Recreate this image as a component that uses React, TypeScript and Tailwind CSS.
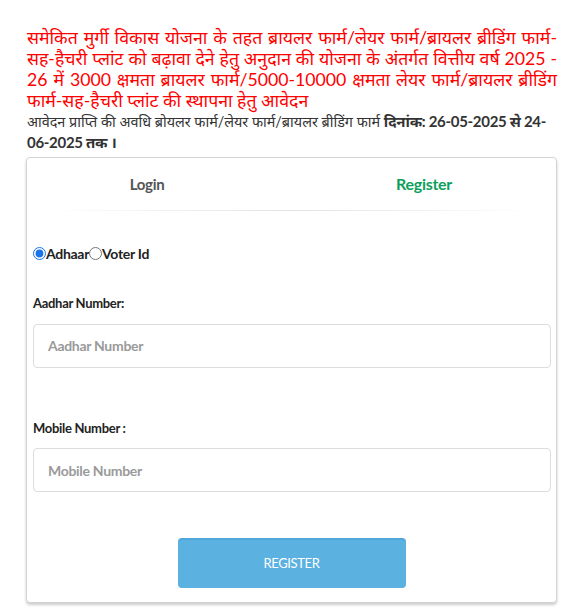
import React from "react";

export default function App() {
  const font = { fontFamily: '"Lato", "Noto Sans Devanagari", "Noto Sans", sans-serif' };
  return (
    <div className="w-[567px] h-[608px] bg-white overflow-hidden" style={font}>
      <div className="pl-[27px] pr-[10px] pt-[27px]">
        <p className="text-[17.7px] leading-[21px] text-[#ff0000] text-justify">
          समेकित मुर्गी विकास योजना के तहत ब्रायलर फार्म/लेयर फार्म/ब्रायलर ब्रीडिंग फार्म-सह-हैचरी प्लांट को बढ़ावा देने हेतु अनुदान की योजना के अंतर्गत वित्तीय वर्ष 2025 - 26 में 3000 क्षमता ब्रायलर फार्म/5000-10000 क्षमता लेयर फार्म/ब्रायलर ब्रीडिंग फार्म-सह-हैचरी प्लांट की स्थापना हेतु आवेदन
        </p>
        <p className="text-[14.4px] leading-[21px] text-[#333]">
          आवेदन प्राप्ति की अवधि ब्रोयलर फार्म/लेयर फार्म/ब्रायलर ब्रीडिंग फार्म{" "}
          <b className="text-[15px] tracking-[-0.3px]">
            दिनांक: 26-05-2025 से 24-<wbr />06-2025 तक ।
          </b>
        </p>
      </div>
      <div className="ml-[26px] mt-[4px] w-[531px] h-[446px] border border-[#d4d4d4] rounded-[4px] shadow-[0_2px_3px_rgba(0,0,0,0.2)] bg-white tracking-[-0.3px]">
        <div className="flex h-[52px] items-center text-[15px] font-bold">
          <div className="w-[240px] text-center text-[#555]">Login</div>
          <div className="flex-1 text-center pl-[25px] text-[#0d9f5a] text-[16px]">Register</div>
        </div>
        <div className="mx-[18px] h-px bg-gradient-to-r from-transparent via-[#e2e2e2] to-transparent" />
        <div className="px-[6px] pt-[32px] flex items-center text-[14px] font-bold text-[#222]">
          <input type="radio" name="t" defaultChecked className="m-0 w-[13px] h-[13px] accent-[#1a73e8]" />
          <span>Adhaar</span>
          <input type="radio" name="t" className="m-0 w-[13px] h-[13px]" />
          <span>Voter Id</span>
        </div>
        <div className="px-[6px]">
          <div className="pt-[30px] text-[13px] font-bold text-[#222]">Aadhar Number:</div>
          <input
            placeholder="Aadhar Number"
            className="mt-[10px] block w-[518px] h-[44px] border border-[#dcdcdc] rounded-[4px] px-[14px] text-[14px] font-bold placeholder:text-[#9a9a9a] outline-none tracking-[-0.3px]"
          />
          <div className="pt-[51px] text-[13px] font-bold text-[#222]">Mobile Number :</div>
          <input
            placeholder="Mobile Number"
            className="mt-[10px] block w-[518px] h-[44px] border border-[#dcdcdc] rounded-[4px] px-[14px] text-[14px] font-bold placeholder:text-[#9a9a9a] outline-none tracking-[-0.3px]"
          />
        </div>
        <div className="flex justify-center pt-[46px]">
          <button className="w-[228px] h-[50px] rounded-[4px] bg-[#5bb1e0] border-t-2 border-[#4ea6d9] text-white text-[13px] tracking-[-0.4px]">
            REGISTER
          </button>
        </div>
      </div>
    </div>
  );
}
